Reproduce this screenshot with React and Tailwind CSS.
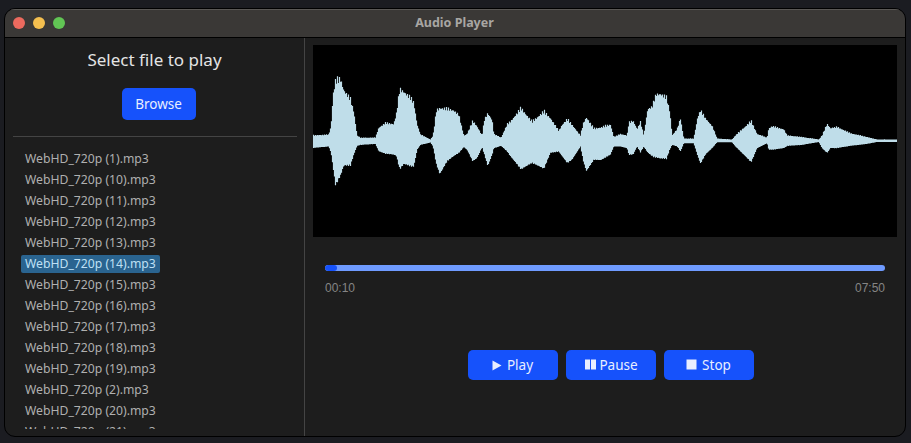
import React from 'react'

const files = ['(1)', '(10)', '(11)', '(12)', '(13)', '(14)', '(15)', '(16)', '(17)', '(18)', '(19)', '(2)', '(20)', '(21)']

// [x, top, bottom] read off the reference crops, in crop pixels (3x)
const left = [[0,285,325],[55,282,320],[62,255,340],[68,155,385],[75,110,438],[90,105,410],[100,140,380],[120,170,378],[130,210,345],[140,285,318],[150,292,315],[195,292,312],[205,260,335],[225,245,342],[250,248,345],[258,215,350],[268,138,390],[280,145,375],[300,165,380],[310,180,382],[320,250,330],[330,282,315],[360,298,308],[368,285,320],[378,205,375],[388,195,405],[410,200,365],[430,205,350],[445,220,340],[460,285,322],[470,280,330],[487,238,365],[500,255,355],[515,285,322],[522,235,345],[532,212,380],[545,235,345],[550,280,325],[572,292,318],[590,250,335],[600,240,350],[632,197,390],[665,240,370],[700,207,388],[720,230,340],[745,270,335],[755,250,350],[770,232,370],[785,250,360],[810,285,320],[820,240,370],[828,225,395],[850,262,360],[870,258,362],[900,250,345]]
const right = [[0,262,340],[10,290,320],[30,280,320],[50,285,325],[55,245,345],[68,238,345],[80,265,320],[90,242,338],[100,285,320],[112,200,340],[125,195,350],[137,155,355],[150,153,358],[168,165,358],[178,210,330],[185,285,315],[200,265,320],[210,232,335],[220,295,310],[250,295,310],[262,225,350],[270,205,372],[285,230,345],[305,255,325],[320,295,307],[365,298,307],[375,285,320],[400,260,345],[422,238,368],[440,280,325],[470,292,310],[475,262,330],[485,256,330],[520,265,325],[530,285,318],[575,290,315],[625,298,306],[635,285,325],[650,248,340],[660,262,325],[680,258,325],[720,278,318],[770,290,312],[800,298,306],[860,298,306]]

const envelope = [
  ...left.map(([x, t, b]) => [x / 3 - 3, t / 3 - 5, b / 3 - 5]),
  ...right.slice(1).map(([x, t, b]) => [x / 3 + 297, t / 3 - 5, b / 3 - 5]),
]

const wavePath = () => {
  let d = ''
  let i = 0
  for (let x = 0; x <= 584; x += 1) {
    while (i < envelope.length - 2 && envelope[i + 1][0] < x) i++
    const [x0, t0, b0] = envelope[i]
    const [x1, t1, b1] = envelope[i + 1]
    const k = Math.min(1, Math.max(0, (x - x0) / (x1 - x0)))
    const top = t0 + (t1 - t0) * k
    const bottom = b0 + (b1 - b0) * k
    // upper edge is spikier than the lower one in the reference
    const jag = Math.abs(Math.sin(x * 1.7)) * 0.07 * (bottom - top)
    d += `M${x + 0.5} ${(top + jag).toFixed(1)}V${(bottom - jag * 0.3).toFixed(1)}`
  }
  return d
}

const Waveform = () => (
  <div className="h-[192px] w-full bg-black">
    <svg width="584" height="192" viewBox="0 0 584 192" className="block">
      <path d={wavePath()} stroke="#bfdde9" strokeWidth="1.2" fill="none" />
    </svg>
  </div>
)

const PlayerButton = ({ icon, label }) => (
  <button className="flex h-[30px] w-[90px] items-center justify-center gap-[5px] rounded-[5px] bg-[#1652fb] text-[13.5px] text-[#e8eeff]">
    {icon}
    {label}
  </button>
)

const App = () => {
  return (
    <div className="h-[443px] w-[911px] overflow-hidden bg-[#1b1c21] px-[5px] pt-[9px] font-['Noto_Sans',sans-serif]">
      <div className="flex h-[427px] w-[900px] flex-col overflow-hidden rounded-[10px] bg-[#1d1d1d] outline outline-1 outline-black">
        <div className="relative flex h-[29px] shrink-0 items-center justify-center border-t border-b border-b-black border-t-[#5a5855] bg-[#3a3836]">
          <div className="absolute left-[8px] top-[7px] flex gap-[8px]">
            <span className="h-[12px] w-[12px] rounded-full bg-[#ec6a5e]"></span>
            <span className="h-[12px] w-[12px] rounded-full bg-[#f4bf4f]"></span>
            <span className="h-[12px] w-[12px] rounded-full bg-[#61c554]"></span>
          </div>
          <span className="pr-[1px] text-[12.5px] font-bold text-[#a8a6a3]">Audio Player</span>
        </div>
        <div className="flex min-h-0 flex-1">
          <div className="flex w-[300px] shrink-0 flex-col border-r border-[#444444]">
            <div className="px-[8px]">
              <h2 className="mt-[10px] h-[24px] text-center text-[17px] leading-[24px] text-[#e4e4e4]">Select file to play</h2>
              <div className="mt-[16px] flex justify-center pl-[8px]">
                <button className="h-[32px] w-[74px] rounded-[5px] bg-[#1652fb] text-[13.5px] text-[#e8eeff]">Browse</button>
              </div>
              <div className="mt-[16px] h-px w-[284px] bg-[#444444]"></div>
            </div>
            <ol className="mt-[11px] h-[281px] overflow-hidden pl-[16px]">
              {files.map((f) => {
                const selected = f === '(14)'
                return (
                  <li key={f} className="h-[21px] text-[12.2px] leading-[21px] text-[#b0b0b0]">
                    <span className={selected ? 'inline-block h-[18px] w-[139px] rounded-[2px] bg-[#2a6490] pl-[4px] leading-[18px] text-[#bfe0f5]' : 'inline-block pl-[4px]'}>
                      WebHD_720p {f}.mp3
                    </span>
                  </li>
                )
              })}
            </ol>
          </div>
          <div className="flex min-w-0 flex-1 flex-col px-[8px] pt-[7px]">
            <Waveform />
            <div className="mt-[28px] px-[12px]">
              <div className="h-[6px] w-full overflow-hidden rounded-full bg-[#6f9bff]">
                <div className="h-full w-[12px] rounded-full bg-[#1652fb]"></div>
              </div>
              <div className="mt-[8px] flex justify-between font-['Liberation_Sans',sans-serif] text-[12px] text-[#858585]">
                <span>00:10</span>
                <span>07:50</span>
              </div>
            </div>
            <div className="mt-[53px] flex justify-center gap-[8px] pl-[11px]">
              <PlayerButton label="Play" icon={<svg width="10" height="11" viewBox="0 0 10 11"><path d="M0.5 0.5L9.5 5.5L0.5 10.5Z" fill="#e8eeff" /></svg>} />
              <PlayerButton label="Pause" icon={<svg width="11" height="11" viewBox="0 0 11 11" className="-mt-[2px] ml-[2px] -mr-[2px]"><path d="M0 0.5H5V10.5H0ZM6 0.5H11V10.5H6Z" fill="#e8eeff" /></svg>} />
              <PlayerButton label="Stop" icon={<svg width="11" height="11" viewBox="0 0 11 11" className="-mt-[2px]"><rect x="0.5" y="0.5" width="10" height="10" fill="#e8eeff" /></svg>} />
            </div>
          </div>
        </div>
      </div>
    </div>
  )
}

export default App
